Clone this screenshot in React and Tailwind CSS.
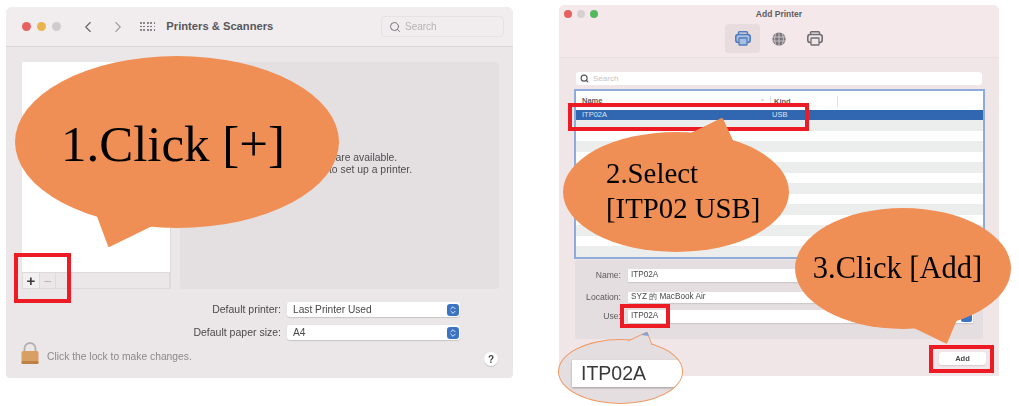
import React from 'react';
import { ChevronLeft, ChevronRight, ChevronsUpDown, Search } from 'lucide-react';

const sans = "font-['Liberation_Sans',Arial,sans-serif]";
const serif = "font-['Liberation_Serif','Times_New_Roman',serif]";
const ORANGE = '#ef8f55';

const Dots = () => (
  <div className="grid grid-cols-5 gap-[1.6px]">
    {Array.from({ length: 15 }).map((_, i) => (
      <span key={i} className="w-[1.8px] h-[1.8px] rounded-full bg-[#66646a]" />
    ))}
  </div>
);

const Lock = () => (
  <svg width="18" height="22" viewBox="0 0 18 22">
    <path d="M3.5 10V6.5a5.5 5.5 0 0 1 11 0V10" fill="none" stroke="#b3b0b1" strokeWidth="1.8" />
    <rect x="0.5" y="9" width="17" height="13" rx="1.5" fill="#d99f62" />
    <rect x="0.5" y="19" width="17" height="3" rx="1.5" fill="#bd8148" />
  </svg>
);

const PrinterIcon = ({ color, paper }) => (
  <svg width="16" height="15" viewBox="0 0 16 15">
    <rect x="3.5" y="0.8" width="9" height="4" rx="1" fill="none" stroke={color} strokeWidth="1.5" />
    <rect x="0.8" y="3.5" width="14.4" height="8" rx="2.5" fill={paper} stroke={color} strokeWidth="1.6" />
    <rect x="4" y="7" width="8" height="7" rx="0.6" fill={paper} stroke={color} strokeWidth="1.3" />
  </svg>
);

const GlobeIcon = () => (
  <svg width="14" height="14" viewBox="0 0 14 14">
    <circle cx="7" cy="7" r="6.6" fill="#77757a" />
    <path d="M0.8 5h12.4M0.8 9h12.4M7 0.5v13M3.8 1.6c-1.6 3.4-1.6 7.4 0 10.8M10.2 1.6c1.6 3.4 1.6 7.4 0 10.8" fill="none" stroke="#d9d2d5" strokeWidth="0.8" />
  </svg>
);

const SelectBox = ({ label, value }) => (
  <div className="flex items-center justify-end gap-[6px] h-[15px]">
    <span className="text-[10.5px] text-[#4b494b]">{label}</span>
    <div className="w-[173px] h-[15px] bg-white rounded-[3px] shadow-[0_1px_1px_#c9c5c7] flex items-center justify-between pl-[6px] pr-[1px]">
      <span className="text-[10.2px] text-[#4a484a]">{value}</span>
      <span className="w-[12px] h-[12px] rounded-[3px] bg-[#3a74c2] flex items-center justify-center">
        <ChevronsUpDown size={10} color="#ffffff" strokeWidth={2} />
      </span>
    </div>
  </div>
);

const PrintersWindow = () => (
  <div className="w-[507px] h-[371px] mt-[7px] ml-[6px] rounded-t-[6px] rounded-b-[4px] bg-[#ebe7e8] flex flex-col blur-[0.4px] shrink-0">
    <div className="h-[40px] bg-[#f1edee] border-b border-[#dcd8da] rounded-t-[6px] flex items-center pl-[16px] pr-[9px] shrink-0">
      <span className="w-[9px] h-[9px] rounded-full bg-[#e5605f]" />
      <span className="w-[9px] h-[9px] rounded-full bg-[#e9b44d] ml-[6px]" />
      <span className="w-[9px] h-[9px] rounded-full bg-[#cfcccd] ml-[6px]" />
      <ChevronLeft size={18} color="#66646a" strokeWidth={1.5} className="ml-[18px]" />
      <ChevronRight size={18} color="#a09ea2" strokeWidth={1.5} className="ml-[12px]" />
      <div className="ml-[13px]"><Dots /></div>
      <span className="ml-[11px] text-[11.2px] font-bold text-[#58565b]">Printers &amp; Scanners</span>
      <div className="ml-auto w-[123px] h-[21px] border border-[#e6e2e3] rounded-[4px] flex items-center pl-[7px] gap-[4px]">
        <Search size={12} color="#76747a" />
        <span className="text-[10px] text-[#b5b2b4]">Search</span>
      </div>
    </div>
    <div className="flex gap-[9px] pl-[16px] pt-[15px]">
      <div className="w-[149px] h-[227px] flex flex-col bg-white border-r border-[#dedadc]">
        <div className="flex-1" />
        <div className="h-[17px] bg-[#ebe7e8] border border-[#dedadc] flex">
          <span className="w-[17px] flex items-center justify-center bg-[#f3f0f1] border-r border-[#dedadc] text-[15px] font-bold leading-none text-[#3d3b3d]">+</span>
          <span className="w-[16px] flex items-center justify-center border-r border-[#dedadc] text-[14px] leading-none text-[#b7b4b6]">−</span>
        </div>
      </div>
      <div className="w-[319px] h-[227px] bg-[#e4e0e2] rounded-[3px] pt-[90px] text-center text-[10.4px] leading-[12px] text-[#4e4c4f]">
        <p>No printers are available.</p>
        <p>Click Add (+) to set up a printer.</p>
      </div>
    </div>
    <div className="flex flex-col gap-[8px] w-[454px] mt-[13px]">
      <SelectBox label="Default printer:" value="Last Printer Used" />
      <SelectBox label="Default paper size:" value="A4" />
    </div>
    <div className="flex items-center pl-[15px] pr-[15px]">
      <Lock />
      <span className="ml-[8px] text-[10.3px] text-[#8b898c] mt-[8px]">Click the lock to make changes.</span>
      <span className="ml-auto mt-[12px] w-[14px] h-[14px] rounded-full bg-white shadow-[0_1px_1px_#c9c5c7] flex items-center justify-center text-[10px] font-bold text-[#4a484a]">?</span>
    </div>
  </div>
);

const FormRow = ({ label, value, className, children }) => (
  <div className={`flex items-center ${className}`}>
    <span className="w-[46px] text-right text-[8.6px] text-[#5c5a5d]">{label}</span>
    <div className="ml-[7px] w-[345px] h-full bg-white shadow-[0_1px_1px_#cfc8cb] flex items-center justify-between pl-[3px] pr-[1px] text-[8.2px] text-[#4a484a]">
      <span>{value}</span>
      {children}
    </div>
  </div>
);

const AddPrinterWindow = () => (
  <div className="w-[440px] h-[371px] mt-[5px] ml-[46px] rounded-t-[6px] bg-[#f0e5e7] flex flex-col blur-[0.4px] shrink-0">
    <div className="h-[53px] bg-[#f5e8ea] border-b border-[#ecdfe1] rounded-t-[6px] relative shrink-0 flex flex-col items-center">
      <div className="absolute left-[5px] top-[5px] flex gap-[5px]">
        <span className="w-[8px] h-[8px] rounded-full bg-[#e5605f]" />
        <span className="w-[8px] h-[8px] rounded-full bg-[#d8cfd2]" />
        <span className="w-[8px] h-[8px] rounded-full bg-[#53b95c]" />
      </div>
      <span className="mt-[3px] text-[8.5px] leading-[12px] font-bold text-[#5f5c60]">Add Printer</span>
      <div className="flex items-center mt-[4px] gap-[1px]">
        <span className="w-[35px] h-[29px] rounded-[3px] bg-[#e8dcdf] flex items-center justify-center">
          <PrinterIcon color="#4f7dbd" paper="#a9bfdf" />
        </span>
        <span className="w-[35px] h-[29px] flex items-center justify-center">
          <GlobeIcon />
        </span>
        <span className="w-[36px] h-[29px] flex items-center justify-center">
          <PrinterIcon color="#6f6d71" paper="#efe6e8" />
        </span>
      </div>
    </div>
    <div className="ml-[17px] mt-[14px] w-[406px] h-[13px] bg-white rounded-[3px] flex items-center pl-[4px] gap-[4px] shrink-0">
      <Search size={9} color="#55535a" strokeWidth={3} />
      <span className="text-[8px] text-[#c6c3c5]">Search</span>
    </div>
    <div className="ml-[15px] mt-[4px] w-[411px] h-[170px] border-2 border-[#8eabd9] bg-white flex flex-col shrink-0 overflow-hidden">
      <div className="h-[19px] flex items-center text-[7.5px] font-bold text-[#5f5d60] pt-[1px] shrink-0">
        <span className="ml-[6px] w-[179px]">Name</span>
        <span className="w-[9px] text-[6px] font-normal text-[#9b999b]">^</span>
        <span className="pl-[3px] w-[68px] h-[11px] leading-[11px] border-x border-[#e2e0e1]">Kind</span>
      </div>
      <div className="h-[10px] bg-[#3067b0] flex items-center text-[7.5px] text-[#dbe6f5] shrink-0">
        <span className="ml-[6px] w-[190px]">ITP02A</span>
        <span>USB</span>
      </div>
      {Array.from({ length: 13 }).map((_, i) => (
        <div key={i} className={`h-[10.5px] shrink-0 ${i % 2 === 0 ? 'bg-[#eceeee]' : 'bg-white'}`} />
      ))}
    </div>
    <div className="ml-[16px] mt-[1px] w-[408px] h-[79px] bg-[#e5dee1] rounded-[3px] pt-[9px] shrink-0">
      <FormRow label="Name:" value="ITP02A" className="h-[13px]" />
      <FormRow label="Location:" value="SYZ 的 MacBook Air" className="h-[11px] mt-[10px]" />
      <FormRow label="Use:" value="ITP02A" className="h-[13px] mt-[7px]">
        <span className="w-[11px] h-[11px] rounded-[2px] bg-[#3a74c2]" />
      </FormRow>
    </div>
    <div className="flex justify-end mt-[13px] pr-[13px]">
      <span className="w-[47px] h-[13px] bg-white rounded-[3px] shadow-[0_1px_1px_#d5cdd0] flex items-center justify-center text-[7.5px] font-bold text-[#4a484a]">Add</span>
    </div>
  </div>
);

export default function App() {
  return (
    <div className={`relative w-[1019px] h-[406px] bg-white overflow-hidden flex items-start ${sans}`}>
      <PrintersWindow />
      <AddPrinterWindow />

      {/* red highlight boxes */}
      <div className="absolute left-[14px] top-[253px] w-[57px] h-[50px] border-[4px] border-[#ed1c24]" />
      <div className="absolute left-[568px] top-[103px] w-[241px] h-[28px] border-[4px] border-[#ed1c24]" />
      <div className="absolute left-[620px] top-[304px] w-[50px] h-[24px] border-[4px] border-[#ed1c24]" />
      <div className="absolute left-[929px] top-[345px] w-[65px] h-[28px] border-[4px] border-[#ed1c24]" />

      {/* callout 1 */}
      <div className={`absolute left-[15px] top-[56px] w-[324px] h-[192px] text-black ${serif}`}>
        <svg width="324" height="192" viewBox="0 0 324 192" className="absolute inset-0">
          <ellipse cx="162" cy="86" rx="162" ry="86" fill={ORANGE} />
          <path d="M81 155 L94 190 L145 165 Z" fill={ORANGE} stroke={ORANGE} strokeWidth="2" strokeLinejoin="round" />
        </svg>
        <div className="relative w-[316px] h-[172px] pt-[4px] flex items-center justify-center text-[51px] leading-none">1.Click [+]</div>
      </div>

      {/* callout 2 */}
      <div className={`absolute left-[563px] top-[117px] w-[226px] h-[135px] text-black ${serif}`}>
        <svg width="226" height="135" viewBox="0 0 226 135" className="absolute inset-0">
          <ellipse cx="113" cy="75" rx="113" ry="60" fill={ORANGE} />
          <path d="M122 20 L159 2 L171 28 Z" fill={ORANGE} stroke={ORANGE} strokeWidth="2" strokeLinejoin="round" />
        </svg>
        <div className="relative pl-[43px] pt-[39px] text-[28.8px] leading-[35px]">
          <div>2.Select</div>
          <div>[ITP02 USB]</div>
        </div>
      </div>

      {/* callout 3 */}
      <div className={`absolute left-[795px] top-[208px] w-[216px] h-[137px] text-black ${serif}`}>
        <svg width="216" height="137" viewBox="0 0 216 137" className="absolute inset-0">
          <ellipse cx="108" cy="60.5" rx="108" ry="60.5" fill={ORANGE} />
          <path d="M118 118 L151 134 L162 108 Z" fill={ORANGE} stroke={ORANGE} strokeWidth="3" strokeLinejoin="round" />
        </svg>
        <div className="relative w-[205px] h-[121px] flex items-center justify-center text-[30.5px] leading-none whitespace-nowrap">3.Click [Add]</div>
      </div>

      {/* zoomed Use field */}
      <div className="absolute left-[558px] top-[332px] w-[126px] h-[73px]">
        <div className="absolute left-0 top-[7px] w-[125px] h-[65px] rounded-[50%] bg-[#e5dee1] border border-[#ef9a63] overflow-hidden">
          <div className="ml-[13px] mt-[20px] h-[27px] bg-white shadow-[0_1px_2px_#9d989b] flex items-center pl-[9px] text-[19.5px] text-[#3a383b]">ITP02A</div>
        </div>
        <svg width="126" height="20" viewBox="0 0 126 20" className="absolute left-0 top-0">
          <path d="M70 9 L89 0 L94 13" fill="#e5dee1" stroke="#ef9a63" strokeWidth="1" />
          <path d="M83 3 L89 0 L91 4 Z" fill="#7fa3d8" />
        </svg>
      </div>
    </div>
  );
}
